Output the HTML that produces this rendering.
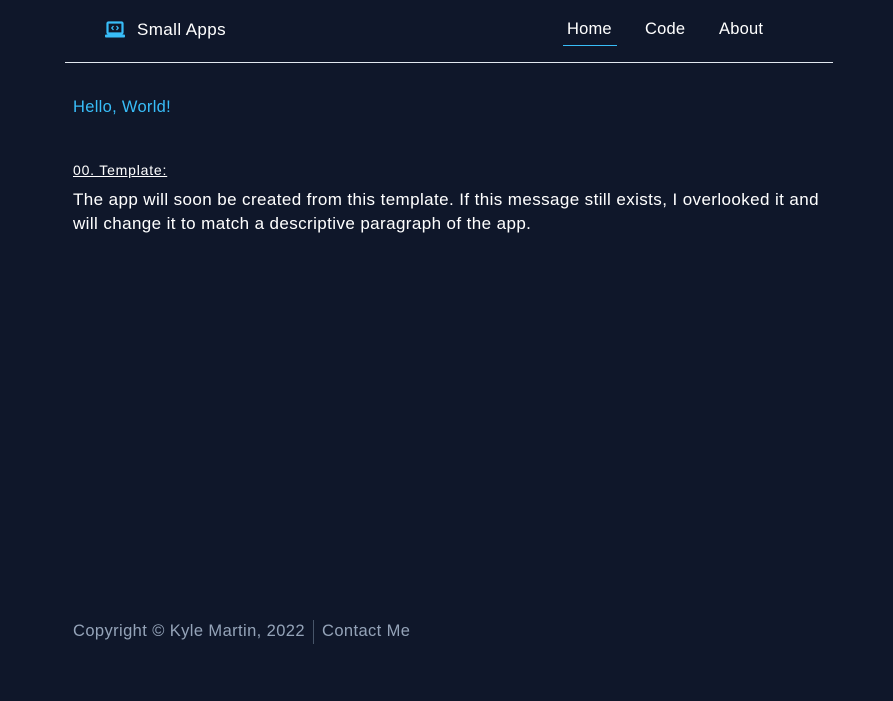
<!DOCTYPE html>
<html><head><style>
body{margin:0;background:#0f172a;width:893px;height:701px;font-family:"Liberation Sans",sans-serif;position:relative;overflow:hidden;color:#fff}
.hdr{position:absolute;left:65px;top:0;width:768px;height:62px;border-bottom:1px solid #e2e8f0}
.logo{position:absolute;left:40px;top:20px;font-size:17px;display:flex;align-items:center;white-space:nowrap;letter-spacing:0.4px}
.logo svg{margin-right:12px}
.nav{position:absolute;top:20px;font-size:16.5px;letter-spacing:0.2px}
.a{position:absolute;white-space:nowrap}
</style></head><body>
<div class="hdr">
<div class="logo"><svg width="20" height="18" viewBox="0 0 20 18"><rect x="2.5" y="1.5" width="15" height="11" rx="1" fill="none" stroke="#38bdf8" stroke-width="2.2"/><rect x="0" y="13.5" width="20" height="3" rx="1" fill="#38bdf8"/><path d="M8.5 5 L6.8 7 L8.5 9 M11.5 5 L13.2 7 L11.5 9" stroke="#38bdf8" stroke-width="1.3" fill="none"/></svg>Small Apps</div>
<div class="nav" style="left:502px">Home</div>
<div style="position:absolute;left:498px;top:45px;width:54px;height:1px;background:#38bdf8"></div>
<div class="nav" style="left:580px">Code</div>
<div class="nav" style="left:654px">About</div>
</div>
<div class="a" style="left:73px;top:98px;font-size:16.5px;color:#38bdf8;letter-spacing:0.3px">Hello, World!</div>
<div class="a" style="left:73px;top:162px;font-size:14px;text-decoration:underline;letter-spacing:0.8px">00. Template:</div>
<div class="a" style="left:73px;top:188px;font-size:17px;line-height:24px;letter-spacing:0.4px">The app will soon be created from this template. If this message still exists, I overlooked it and<br>will change it to match a descriptive paragraph of the app.</div>
<div class="a" style="left:73px;top:622px;font-size:16.5px;color:#94a3b8;letter-spacing:0.4px">Copyright © Kyle Martin, 2022</div>
<div style="position:absolute;left:313px;top:620px;width:1px;height:24px;background:#475569"></div>
<div class="a" style="left:322px;top:622px;font-size:16.5px;color:#94a3b8;letter-spacing:0.4px">Contact Me</div>
</body></html>
